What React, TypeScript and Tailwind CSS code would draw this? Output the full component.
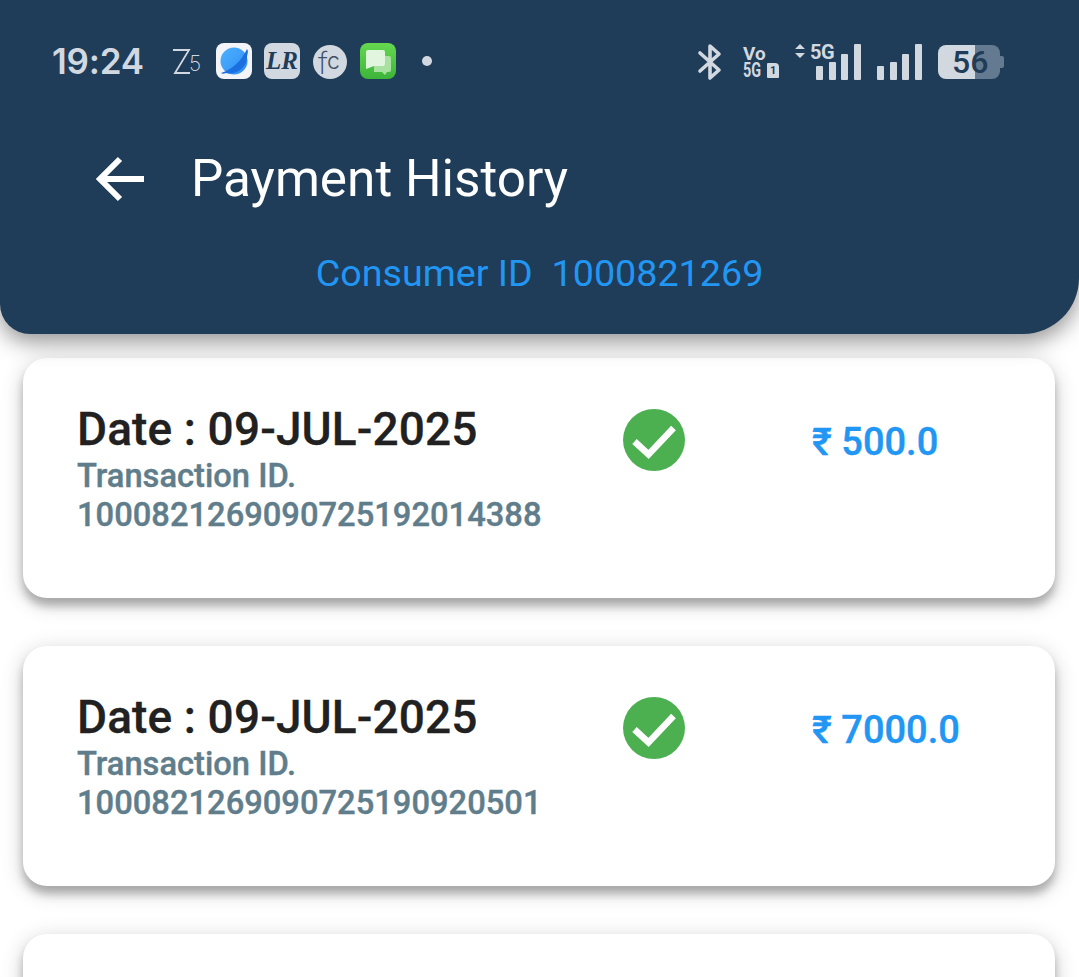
import React from "react";

function Check() {
  return (
    <svg width="64" height="64" viewBox="0 0 64 64" className="block">
      <circle cx="32" cy="32" r="31" fill="#4caf50" />
      <path d="M12.5 33.5 L26.5 46.5 L51.5 20" fill="none" stroke="#fff" strokeWidth="6.5" />
    </svg>
  );
}

function Bars() {
  return (
    <div className="flex items-end gap-[5.67px] h-[36px]">
      {[14, 18, 26, 36].map((h, i) => (
        <div key={i} className="w-[7px] bg-[#d2d8e0] rounded-[1px]" style={{ height: h }} />
      ))}
    </div>
  );
}

function Card({ id, amount }: { id: string; amount: string }) {
  return (
    <div className="h-[240px] bg-white rounded-[24px] shadow-[0_8px_9px_rgba(0,0,0,0.24),0_5px_22px_rgba(0,0,0,0.2)] pl-[54px] pt-[45px] flex shrink-0">
      <div className="w-[545px] shrink-0">
        <div className="text-[46px] leading-[52px] font-medium text-[#212121] tracking-[0.12px] [-webkit-text-stroke:0.3px_#212121]">Date : 09-JUL-2025</div>
        <div className="text-[32.7px] leading-[39px] font-medium text-[#607d8b] [-webkit-text-stroke:0.4px_#607d8b]">
          <div className="mt-[2px]">Transaction ID.</div>
          <div>{id}</div>
        </div>
      </div>
      <div className="w-[190px] shrink-0 pt-[5px]">
        <Check />
      </div>
      <div className="text-[38px] leading-[44px] font-medium text-[#2196f3] pt-[17px] [-webkit-text-stroke:0.4px_#2196f3]">₹ {amount}</div>
    </div>
  );
}

export default function App() {
  return (
    <div className="w-[1079px] h-[977px] overflow-hidden bg-white font-['Roboto',sans-serif]">
      <header className="h-[334px] bg-[#1f3c58] rounded-bl-[30px] rounded-br-[56px] shadow-[0_8px_22px_rgba(0,0,0,0.42)] relative z-10">
        <div className="h-[122px] pt-[43px] pl-[52px] pr-[75px] flex items-start justify-between">
          <div className="flex items-center h-[36px] font-['Inter',sans-serif]">
            <span className="text-[35px] font-semibold text-[#d2d8e0] tracking-[-0.2px] w-[120px]">19:24</span>
            <span className="relative w-[44px] h-[36px] text-[#d2d8e0]">
              <svg width="20" height="27" viewBox="0 0 20 27" className="absolute left-0 top-[5px]">
                <path d="M1 2 H17 L3 25 H18" fill="none" stroke="#d2d8e0" strokeWidth="1.8" />
              </svg>
              <span className="absolute left-[17px] top-[9px] text-[21px] leading-[24px] font-extralight">5</span>
            </span>
            <svg width="36" height="36" viewBox="0 0 36 36">
              <defs>
                <linearGradient id="planet" x1="0" y1="0" x2="1" y2="1">
                  <stop offset="0" stopColor="#4db2ff" />
                  <stop offset="1" stopColor="#2f8cf5" />
                </linearGradient>
              </defs>
              <rect width="36" height="36" rx="8" fill="#f2f4f7" />
              <circle cx="18" cy="18" r="13.5" fill="url(#planet)" />
              <path d="M5 30 C16 27 26 17 31 6 C33 9 31 11 31 15 C31 24 20 33 10 30 C8 31 6 31 5 30 Z" fill="#1b6fe0" />
            </svg>
            <div className="ml-[12px] w-[36px] h-[36px] rounded-[8px] bg-[#d2d8e0] text-[#1f3c58] font-['Liberation_Serif',serif] italic font-bold text-[25px] leading-[35px] text-center">LR</div>
            <div className="relative ml-[13px] w-[34px] h-[34px] mt-[2px] rounded-full bg-[#d2d8e0] text-[#3c5068] font-light">
              <span className="absolute left-[5px] top-[1px] text-[31px] leading-[34px] font-extralight">f</span>
              <span className="absolute left-[14px] top-[3px] text-[23px] leading-[26px] font-light">c</span>
            </div>
            <svg width="36" height="36" viewBox="0 0 36 36" className="ml-[13px]">
              <defs>
                <linearGradient id="msg" x1="0" y1="0" x2="0" y2="1">
                  <stop offset="0" stopColor="#66d84f" />
                  <stop offset="1" stopColor="#3db43a" />
                </linearGradient>
              </defs>
              <rect width="36" height="36" rx="8" fill="url(#msg)" />
              <path d="M14 13 H29 Q31 13 31 15 V27 Q31 29 29 29 H27 L25 32 L22 29 H14 Z" fill="#a9e2a0" />
              <path d="M8 7 H23 Q25 7 25 9 V21 Q25 23 23 23 H14 L6 26 V9 Q6 7 8 7 Z" fill="#e2f5df" />
            </svg>
            <div className="ml-[26px] w-[10px] h-[10px] rounded-full bg-[#d2d8e0]" />
          </div>
          <div className="flex items-center h-[38px]">
            <svg width="26" height="38" viewBox="0 0 26 38" className="mr-[20px]">
              <path d="M3 10 L22 27 L13 35 V3 L22 11 L3 28" fill="none" stroke="#d2d8e0" strokeWidth="3.6" strokeLinejoin="round" strokeLinecap="round" />
            </svg>
            <div className="relative w-[52px] h-[36px] font-bold text-[#d2d8e0]">
              <span className="absolute left-0 top-[2px] text-[19px] leading-[15px]">Vo</span>
              <span className="absolute left-0 top-[17px] w-[23px] text-[20px] leading-[18px] scale-x-[0.72] origin-left">5G</span>
              <span className="absolute left-[24px] top-[19px] w-[12px] h-[15px] bg-[#d2d8e0] rounded-[1px] rounded-tr-[4px] text-[#1f3c58] text-[11px] leading-[15px] text-center">1</span>
            </div>
            <div className="relative w-[66px] h-[36px] mr-[16px]">
              <svg width="10" height="14" viewBox="0 0 10 14" className="absolute left-0 top-0">
                <path d="M5 0 L10 5 H0 Z M0 9 H10 L5 14 Z" fill="#d2d8e0" />
              </svg>
              <span className="absolute left-[15px] top-[-2px] text-[20px] leading-[20px] tracking-[-0.5px] font-bold text-[#d2d8e0]">5G</span>
              <div className="absolute left-[21px] bottom-0">
                <Bars />
              </div>
            </div>
            <Bars />
            <div className="relative w-[66px] h-[34px] ml-[16px] flex items-center">
              <div className="w-[37px] h-full bg-[#d2d8e0] rounded-l-[8px]" />
              <div className="w-[25px] h-full bg-[#647a90] rounded-r-[8px]" />
              <div className="w-[4px] h-[12px] bg-[#647a90] rounded-r-[2px]" />
              <span className="absolute left-[14px] top-0 text-[32px] leading-[34px] font-medium text-[#1f3c58]">56</span>
            </div>
          </div>
        </div>
        <div className="h-[114px] flex items-center pl-[93px]">
          <svg width="52" height="48" viewBox="0 0 52 48" className="mr-[46px]">
            <path d="M51 24 H8 M27 4 L7 24 L27 44" fill="none" stroke="#fff" strokeWidth="6" />
          </svg>
          <h1 className="text-[51.3px] leading-[56px] font-normal text-white">Payment History</h1>
        </div>
        <div className="text-center text-[37.7px] leading-[42px] text-[#2196f3] whitespace-pre mt-[16px]">Consumer ID  1000821269</div>
      </header>
      <main className="flex flex-col gap-[48px] pt-[24px] pl-[23px] pr-[24px]">
        <Card id="1000821269090725192014388" amount="500.0" />
        <Card id="1000821269090725190920501" amount="7000.0" />
        <div className="h-[240px] bg-white rounded-[24px] shadow-[0_8px_9px_rgba(0,0,0,0.24),0_5px_22px_rgba(0,0,0,0.2)] shrink-0" />
      </main>
    </div>
  );
}
